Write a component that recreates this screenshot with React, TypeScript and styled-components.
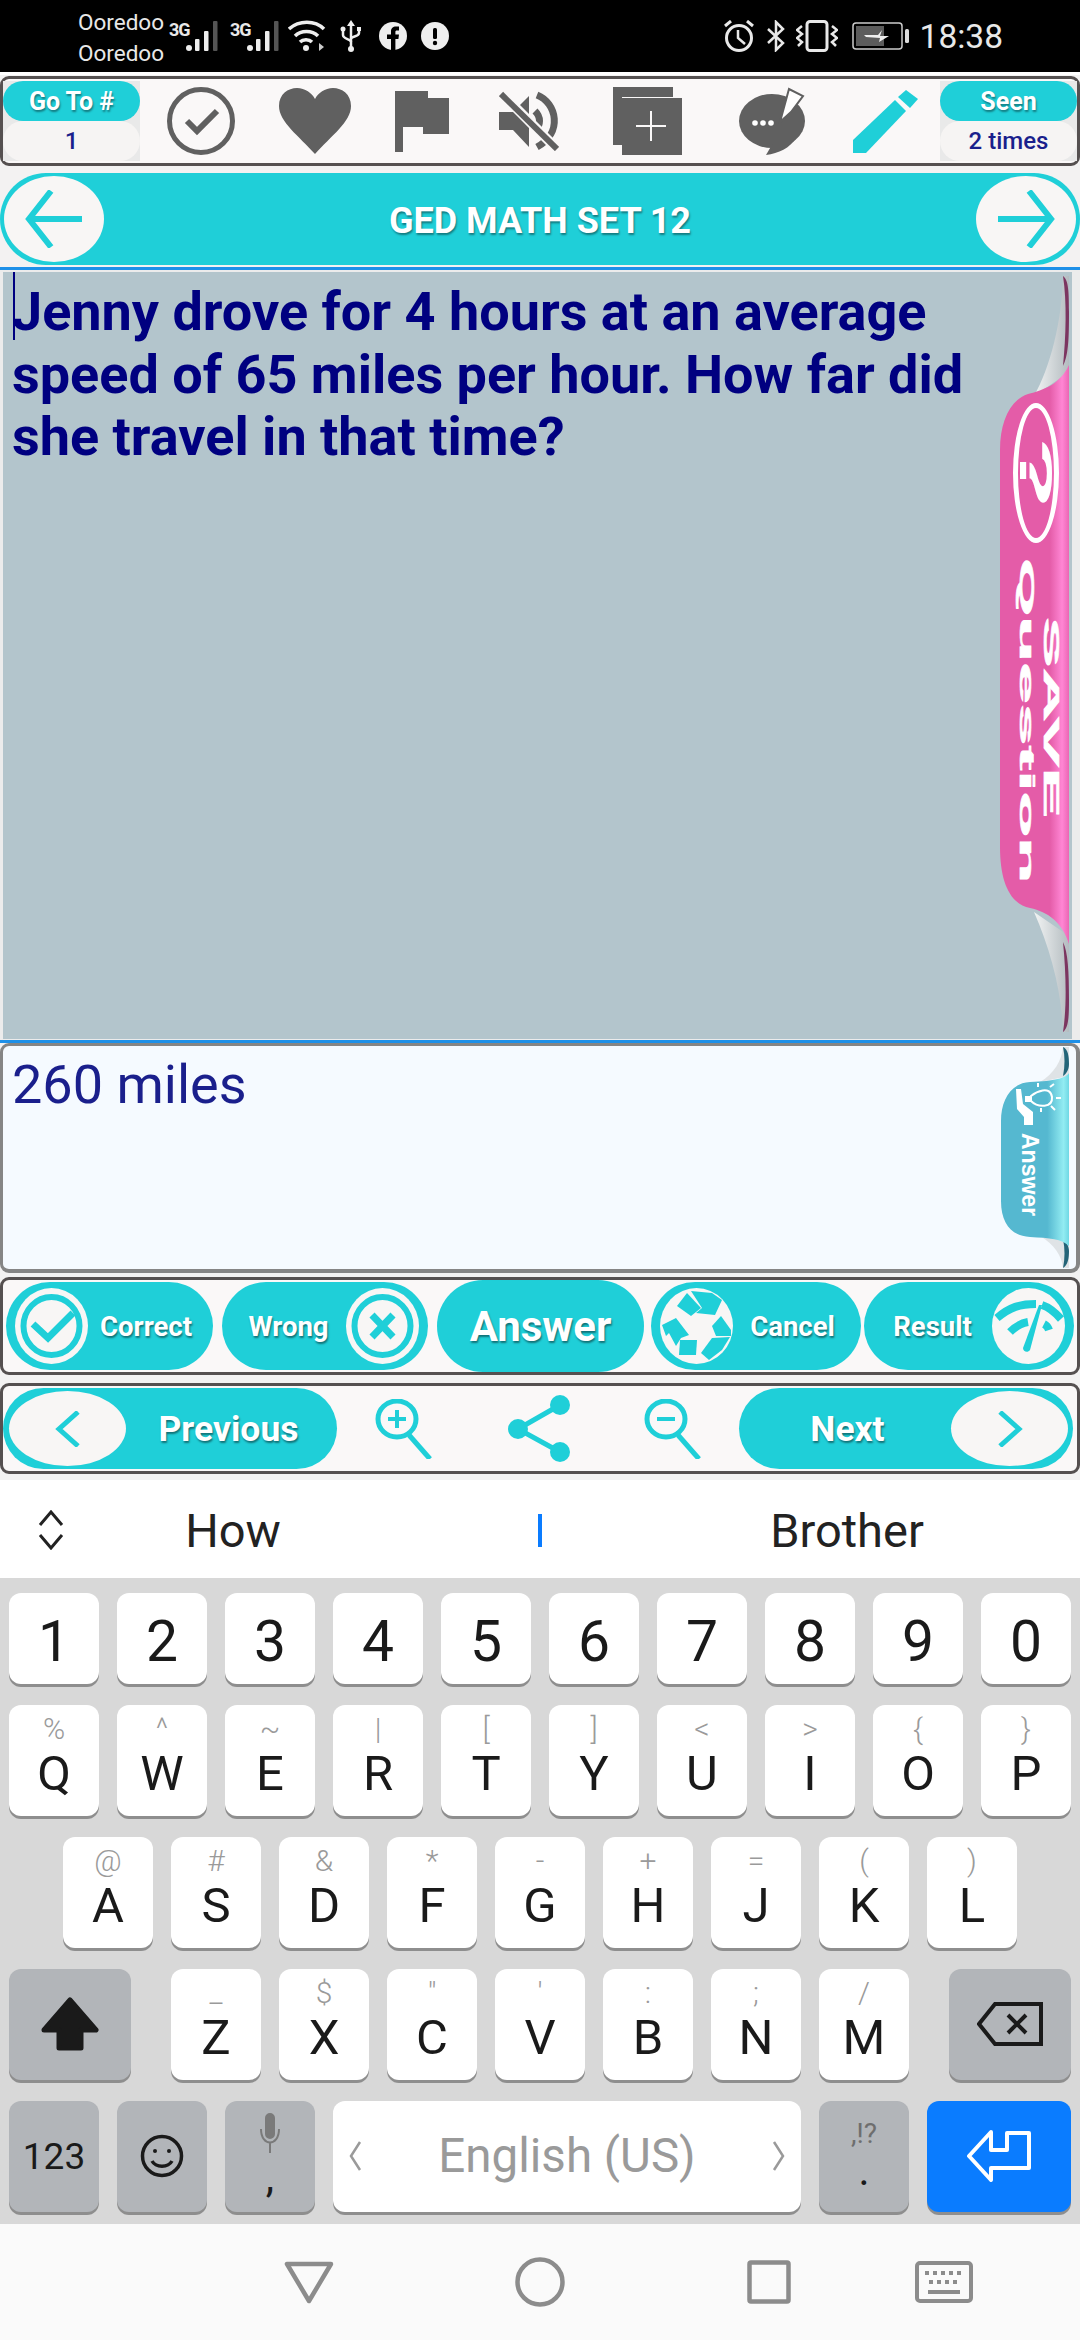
import React from 'react'
import styled, { createGlobalStyle } from 'styled-components'

const TEAL = '#1fcfd8'
const ICON = '#606060'
const NAVY = '#1a1f8c'

const GlobalStyle = createGlobalStyle`
  html, body { margin: 0; padding: 0; background: #f3f2f2; }
  * { box-sizing: border-box; }
  #root { width: 1080px; height: 2340px; overflow: hidden; font-family: Roboto, "Liberation Sans", sans-serif; }
`

const Page = styled.div`
  width: 1080px;
  height: 2340px;
  display: flex;
  flex-direction: column;
  background: #f3f2f2;
`

/* status bar */
const StatusBar = styled.div`
  height: 75px;
  flex-shrink: 0;
  background: #000;
  border-bottom: 3px solid #fff;
  display: flex;
  align-items: center;
  padding: 0 77px 0 78px;
  color: #e8e8e8;
`
const Carriers = styled.div`
  width: 91px;
  font-size: 22.5px;
  line-height: 31px;
  margin-top: 3px;
`
const Tech = styled.span`
  font-size: 18px;
  font-weight: 700;
  line-height: 18px;
  width: 17px;
  margin-top: -13px;
  letter-spacing: -1px;
`
const StatusGroup = styled.div`
  display: flex;
  align-items: center;
  margin-left: ${p => p.$ml ?? 0}px;
`
const Clock = styled.span`
  font-size: 33.5px;
  margin-left: 10px;
`
const Spacer = styled.div`
  flex: 1;
`

/* toolbars */
const Bar = styled.div`
  border: 3px solid #555050;
  border-radius: 9px;
  background: #faf8f8;
  display: flex;
  align-items: center;
  flex-shrink: 0;
  height: ${p => p.$h}px;
  margin-top: ${p => p.$mt ?? 0}px;
  padding: 0 ${p => p.$px ?? 0}px;
`
const Counter = styled.div`
  width: 137px;
  height: 80px;
  background: #e9e9e9;
  display: flex;
  flex-direction: column;
  flex-shrink: 0;
`
const CounterHead = styled.div`
  height: 40px;
  background: ${TEAL};
  border-radius: 20px;
  color: #fff;
  font-size: 25px;
  font-weight: 700;
  display: flex;
  align-items: center;
  justify-content: center;
  text-shadow: 1px 2px 2px rgba(0, 0, 0, 0.4);
`
const CounterValue = styled.div`
  height: 40px;
  background: #f6f4f3;
  border-radius: 20px;
  color: ${NAVY};
  font-size: 24px;
  font-weight: 500;
  display: flex;
  align-items: center;
  justify-content: center;
`
const ToolIcon = styled.svg`
  display: block;
  flex-shrink: 0;
  margin-left: ${p => p.$ml ?? 0}px;
`

const TitleBar = styled.div`
  height: 92px;
  margin-top: 7px;
  flex-shrink: 0;
  background: ${TEAL};
  border-radius: 46px;
  padding: 0 4px;
  display: flex;
  align-items: center;
  justify-content: space-between;
`
const RoundBtn = styled.div`
  width: ${p => p.$w ?? 100}px;
  height: ${p => p.$h ?? 86}px;
  background: #f8f6f5;
  border-radius: 50%;
  display: flex;
  align-items: center;
  justify-content: center;
  flex-shrink: 0;
`
const Title = styled.div`
  color: #fff;
  font-size: 36px;
  font-weight: 700;
  padding-top: 4px;
  text-shadow: 1px 2px 2px rgba(0, 0, 0, 0.4);
`

/* question and answer */
const QuestionPanel = styled.div`
  position: relative;
  height: 776px;
  margin-top: 2px;
  flex-shrink: 0;
  border-top: 3px solid #1e90e8;
  border-bottom: 3px solid #1e90e8;
  padding: 2px 8px 1px 3px;
  background: #ececec;
`
const QuestionBody = styled.div`
  height: 100%;
  background: #b3c5cc;
  padding: 9px 9px;
  color: #000080;
  font-size: 54px;
  font-weight: 700;
  line-height: 62.5px;
  position: relative;
`
const Caret = styled.span`
  position: absolute;
  left: 10px;
  top: 0;
  width: 2px;
  height: 68px;
  background: #000080;
`
const QuestionText = styled.div`
  width: 970px;
`
const AnswerPanel = styled.div`
  position: relative;
  height: 230px;
  flex-shrink: 0;
  background: #f5faff;
  border: 3px solid #858585;
  border-width: 3px 4px 4px 3px;
  border-radius: 9px;
  padding: 8px 9px;
  color: ${NAVY};
  font-size: 54px;
  line-height: 62px;
`
const TabArt = styled.svg`
  position: absolute;
  display: block;
  right: ${p => p.$r}px;
  top: ${p => p.$t}px;
`
const TabText = styled.span`
  position: absolute;
  left: ${p => p.$x}px;
  top: ${p => p.$y}px;
  writing-mode: vertical-rl;
  color: #fff;
  font-family: 'Liberation Sans', Arial, sans-serif;
  font-weight: 700;
  font-size: ${p => p.$size}px;
  line-height: 1;
  white-space: nowrap;
  transform: scaleY(${p => p.$stretch ?? 1});
  transform-origin: top center;
  -webkit-text-stroke: ${p => (p.$stretch ? '0.5px #fff' : '0')};
`
const HelpRing = styled.div`
  position: absolute;
  left: 1013px;
  top: 133px;
  width: 46px;
  height: 140px;
  border: 5px solid #fff;
  border-radius: 50%;
  display: flex;
  align-items: center;
  justify-content: center;
  color: #fff;
  font-family: 'Liberation Sans', Arial, sans-serif;
  font-weight: 700;
  font-size: 46px;
  writing-mode: vertical-rl;
`
const HelpGlyph = styled.span`
  display: block;
  line-height: 1;
  transform: scaleY(2.6);
`

/* pill buttons */
const Pill = styled.div`
  width: ${p => p.$w}px;
  height: ${p => p.$h ?? 88}px;
  margin-left: ${p => p.$ml ?? 0}px;
  border-radius: ${p => (p.$h ?? 88) / 2 + 6}px;
  background: ${TEAL};
  display: flex;
  flex-direction: ${p => (p.$flip ? 'row-reverse' : 'row')};
  align-items: center;
  flex-shrink: 0;
  padding: 0 ${p => p.$pad ?? 9}px;
`
const PillLabel = styled.span`
  flex: 1;
  text-align: center;
  color: #fff;
  font-weight: 700;
  font-size: ${p => p.$size ?? 27.5}px;
  text-shadow: 1px 2px 2px rgba(0, 0, 0, 0.45);
`
const ActionCircle = styled.svg`
  display: block;
  width: 73px;
  height: 76px;
  flex-shrink: 0;
`

/* keyboard */
const Suggestions = styled.div`
  height: 98px;
  margin-top: 6px;
  flex-shrink: 0;
  background: #fff;
  position: relative;
  display: grid;
  grid-template-columns: 78px 310px 1fr 310px 78px;
  align-items: center;
  color: #222;
  font-size: 47px;
  padding-top: 2px;
`
const SuggestWord = styled.span`
  text-align: center;
`
const SuggestCursor = styled.span`
  justify-self: center;
  width: 4px;
  height: 33px;
  background: #0a7cff;
`
const Keyboard = styled.div`
  height: 646px;
  flex-shrink: 0;
  background: #d8d8d8;
  padding: 15px 9px 0;
  display: flex;
  flex-direction: column;
  gap: 21.5px;
`
const KeyRow = styled.div`
  display: flex;
  gap: 18px;
  padding-left: ${p => p.$indent ?? 0}px;
`
const Key = styled.div`
  width: ${p => p.$w ?? 90}px;
  height: ${p => p.$h ?? 110.5}px;
  margin-left: ${p => p.$ml ?? 0}px;
  margin-right: ${p => p.$mr ?? 0}px;
  flex-shrink: 0;
  border-radius: 12px;
  background: ${p => p.$bg ?? '#fff'};
  box-shadow: 0 3px 0 #8e8e8e;
  color: #1a1a1a;
  display: flex;
  flex-direction: column;
  align-items: center;
  justify-content: center;
  position: relative;
`
const Digit = styled.span`
  font-size: 57px;
  line-height: 57px;
  margin-top: 6px;
`
const Hint = styled.span`
  color: #9a9a9a;
  font-size: 30px;
  line-height: 34px;
  height: 34px;
  font-weight: 300;
`
const Letter = styled.span`
  font-size: 49px;
  line-height: 56px;
  font-weight: 400;
  margin-bottom: 7px;
`
const SpaceKey = styled(Key)`
  flex-direction: row;
  justify-content: space-between;
  padding: 0 14px;
  color: #9a9a9a;
  font-size: 47.5px;
`
const SmallKeyText = styled.span`
  font-size: ${p => p.$size ?? 37}px;
  line-height: 1;
  color: ${p => p.$color ?? '#1a1a1a'};
  margin-top: ${p => p.$mt ?? 0}px;
`

const BottomNav = styled.div`
  flex: 1;
  background: #fafafa;
  display: flex;
  align-items: center;
  padding-left: 284px;
`
const NavGlyph = styled.svg`
  display: block;
  margin-left: ${p => p.$ml ?? 0}px;
  flex-shrink: 0;
`

const digits = '1234567890'.split('')
const row2 = [['%', 'Q'], ['^', 'W'], ['~', 'E'], ['|', 'R'], ['[', 'T'], [']', 'Y'], ['<', 'U'], ['>', 'I'], ['{', 'O'], ['}', 'P']]
const row3 = [['@', 'A'], ['#', 'S'], ['&', 'D'], ['*', 'F'], ['-', 'G'], ['+', 'H'], ['=', 'J'], ['(', 'K'], [')', 'L']]
const row4 = [['_', 'Z'], ['$', 'X'], ['"', 'C'], ["'", 'V'], [':', 'B'], [';', 'N'], ['/', 'M']]

const LetterKey = ({ hint, letter }: { hint: string; letter: string }) => (
  <Key>
    <Hint>{hint}</Hint>
    <Letter>{letter}</Letter>
  </Key>
)

const Signal = () => (
  <svg width="32" height="32" viewBox="0 0 32 32" style={{ display: 'block' }}>
    <circle cx="3" cy="28" r="3" fill="#eee" />
    <rect x="9" y="19" width="4.5" height="12" rx="1" fill="#eee" />
    <rect x="18" y="11" width="4.5" height="20" rx="1" fill="#eee" />
    <rect x="27" y="1" width="4.5" height="30" rx="1" fill="#555" />
  </svg>
)

const CheckRing = () => (
  <ActionCircle viewBox="0 0 73 76">
    <ellipse cx="36.5" cy="38" rx="36.5" ry="38" fill="#f8f6f5" />
    <ellipse cx="36.5" cy="38" rx="28" ry="29" fill="none" stroke={TEAL} strokeWidth="6" />
    <path d="M18 36 L33 50 L58 25" fill="none" stroke={TEAL} strokeWidth="7" />
  </ActionCircle>
)

const CrossRing = () => (
  <ActionCircle viewBox="0 0 73 76">
    <ellipse cx="36.5" cy="38" rx="36.5" ry="38" fill="#f8f6f5" />
    <ellipse cx="36.5" cy="38" rx="28" ry="29" fill="none" stroke={TEAL} strokeWidth="6" />
    <path d="M26 27 L47 49 M47 27 L26 49" fill="none" stroke={TEAL} strokeWidth="7" />
  </ActionCircle>
)

const RecycleRing = () => (
  <ActionCircle viewBox="0 0 73 76">
    <ellipse cx="36.5" cy="38" rx="36.5" ry="38" fill="#f8f6f5" />
    <g fill={TEAL}>
      <path d="M17 18 L27 5 L41 20 L31 28 Z" />
      <path d="M31 3 L52 5 L62 12 L55 27 L36 25 L42 20 Z" />
      <path d="M61 28 L71 42 L71 48 L56 48 L52 38 Z" />
      <path d="M41 65 L52 50 L70 49 L62 62 L49 72 Z" />
      <path d="M20 52 L37 52 L36 67 L19 67 Z" />
      <path d="M2 37 L16 30 L29 47 L21 50 L16 58 L9 45 L6 48 Z" />
    </g>
  </ActionCircle>
)

const GaugeRing = () => (
  <ActionCircle viewBox="0 0 73 76">
    <ellipse cx="36.5" cy="38" rx="36.5" ry="38" fill="#f8f6f5" />
    <path d="M5 30 C18 19 28 16 44 16 M50 17 C56 19 62 23 69 31" fill="none" stroke={TEAL} strokeWidth="8" />
    <path d="M18 44 C24 38 30 35 36 34 M52 36 C54 37 56 39 57 42" fill="none" stroke={TEAL} strokeWidth="8" />
    <path d="M47 17 L50 17 L38 62 C36 65 31 64 31 60 Z" fill={TEAL} />
  </ActionCircle>
)

const SaveTab = () => (
  <TabArt $r={8} $t={2} width="72" height="766" viewBox="0 0 72 766">
    <defs>
      <linearGradient id="pink" x1="0" x2="1" y1="0" y2="0">
        <stop offset="0" stopColor="#e45ca8" />
        <stop offset="0.72" stopColor="#e45ca8" />
        <stop offset="0.9" stopColor="#ff86d4" />
        <stop offset="1" stopColor="#ec66b4" />
      </linearGradient>
      <linearGradient id="curl" x1="0" x2="1" y1="0" y2="0">
        <stop offset="0" stopColor="#f2f4f4" />
        <stop offset="1" stopColor="#b4bcc0" />
      </linearGradient>
    </defs>
    <path d="M63 4 C62 50 50 96 34 124 L69 100 L69 4 Z" fill="url(#curl)" />
    <path d="M63 760 C62 720 50 676 34 640 L69 664 L69 760 Z" fill="url(#curl)" />
    <path d="M63 4 C68 8 69 16 69 40 C69 70 68 84 63 94 C66 64 67 30 63 4 Z" fill="#7c3560" />
    <path d="M63 760 C68 756 69 748 69 728 C69 700 68 680 63 670 C66 700 67 734 63 760 Z" fill="#7c3560" />
    <path d="M69 93 C60 112 44 118 28 122 C10 128 0 150 0 178 L0 575 C0 610 10 632 30 636 C48 640 62 650 69 672 Z" fill="url(#pink)" />
  </TabArt>
)

const AnswerTab = () => (
  <TabArt $r={4} $t={0} width="72" height="226" viewBox="0 0 72 226">
    <defs>
      <linearGradient id="aqua" x1="0" x2="1" y1="0" y2="0">
        <stop offset="0" stopColor="#55b8d0" />
        <stop offset="0.68" stopColor="#55b8d0" />
        <stop offset="0.92" stopColor="#92ecf2" />
        <stop offset="1" stopColor="#6fd8e4" />
      </linearGradient>
    </defs>
    <path d="M63 1 C62 14 54 28 40 36 L69 30 L69 1 Z" fill="#dfe3e6" />
    <path d="M63 222 C62 210 54 198 40 190 L69 194 L69 222 Z" fill="#dfe3e6" />
    <path d="M63 1 C68 3 69 10 69 18 C69 24 66 28 63 30 C65 20 65 10 63 1 Z" fill="#236478" />
    <path d="M63 222 C68 219 69 212 69 205 C69 200 66 196 63 193 C65 203 65 212 63 222 Z" fill="#236478" />
    <path d="M69 27 C66 32 55 35 30 36 C10 37 1 55 1 75 L1 155 C1 178 12 190 30 191 C50 192 62 193 69 200 Z" fill="url(#aqua)" />
    <path d="M16 43 L21 43 L23 58 L33 66 L33 79 L24 79 L24 71 L17 63 Z" fill="#fff" />
    <path d="M31 50 C36 46 50 39 52 51 C53 62 38 62 31 55 Z" fill="none" stroke="#fff" strokeWidth="2" />
    <rect x="25" y="50" width="6" height="6" fill="#fff" />
    <path d="M38 41 L38 37 M50 41 L54 38 M56 52 L61 52 M51 60 L55 64 M41 62 L41 66" stroke="#fff" strokeWidth="2" />
  </TabArt>
)

export default function App() {
  return (
    <Page>
      <GlobalStyle />
      <StatusBar>
        <Carriers>
          Ooredoo
          <br />
          Ooredoo
        </Carriers>
        <Tech>3G</Tech>
        <Signal />
        <StatusGroup $ml={12}>
          <Tech>3G</Tech>
          <Signal />
        </StatusGroup>
        <StatusGroup $ml={9}>
          <svg width="38" height="32" viewBox="0 0 38 32" fill="none" stroke="#eee" strokeWidth="3.5" style={{ display: 'block' }}>
            <path d="M1 9 C11 0 27 0 36 9" />
            <path d="M7 16 C13 10 24 10 30 16" />
            <path d="M12 22 C15 19 21 19 24 22" />
            <circle cx="18" cy="28" r="3" fill="#eee" stroke="none" />
            <path d="M31 23 L36 27 L31 31 Z" fill="#ccc" stroke="none" />
          </svg>
        </StatusGroup>
        <StatusGroup $ml={14}>
          <svg width="22" height="32" viewBox="0 0 22 32" fill="none" stroke="#eee" strokeWidth="2.5" style={{ display: 'block' }}>
            <path d="M11 4 L11 28" />
            <path d="M11 0 L15 6 L7 6 Z" fill="#eee" stroke="none" />
            <path d="M3 10 L3 15 C3 19 11 19 11 22" />
            <path d="M19 10 L19 13 C19 17 11 16 11 19" />
            <circle cx="11" cy="29" r="3" fill="#eee" stroke="none" />
            <circle cx="3" cy="9" r="2.5" fill="#eee" stroke="none" />
            <rect x="17" y="7" width="4" height="4" fill="#eee" stroke="none" />
          </svg>
        </StatusGroup>
        <StatusGroup $ml={17}>
          <svg width="28" height="28" viewBox="0 0 28 28" style={{ display: 'block' }}>
            <circle cx="14" cy="14" r="14" fill="#eee" />
            <path d="M12 28 L12 17 L8 17 L8 12.5 L12 12.5 L12 9.5 C12 6 14 4.5 17 4.5 L20 4.5 L20 8.5 L18 8.5 C16.7 8.5 16.4 9 16.4 10 L16.4 12.5 L20 12.5 L19.4 17 L16.4 17 L16.4 28 Z" fill="#000" />
          </svg>
        </StatusGroup>
        <StatusGroup $ml={14}>
          <svg width="28" height="28" viewBox="0 0 28 28" style={{ display: 'block' }}>
            <circle cx="14" cy="14" r="14" fill="#eee" />
            <rect x="12" y="6" width="4" height="11" rx="1.5" fill="#000" />
            <circle cx="14" cy="21" r="2.2" fill="#000" />
          </svg>
        </StatusGroup>
        <Spacer />
        <svg width="32" height="32" viewBox="0 0 32 32" fill="none" stroke="#e8e8e8" strokeWidth="3" style={{ display: 'block' }}>
          <circle cx="16" cy="18" r="12.5" />
          <path d="M15 10 L15 18 L22 24" strokeWidth="2.5" />
          <path d="M2 6 L8 1 M30 6 L24 1" />
        </svg>
        <StatusGroup $ml={12}>
          <svg width="18" height="32" viewBox="0 0 18 32" fill="none" stroke="#e8e8e8" strokeWidth="2.5" style={{ display: 'block' }}>
            <path d="M1 9 L16 23 L9 30 L9 2 L16 9 L1 23" />
          </svg>
        </StatusGroup>
        <StatusGroup $ml={11}>
          <svg width="42" height="32" viewBox="0 0 42 32" fill="none" stroke="#e8e8e8" strokeWidth="2.5" style={{ display: 'block' }}>
            <rect x="11" y="1.5" width="20" height="29" rx="3" strokeWidth="3" />
            <path d="M6 6 L1 10 L6 14 L1 18 L6 22 L2 26" />
            <path d="M36 6 L41 10 L36 14 L41 18 L36 22 L40 26" />
          </svg>
        </StatusGroup>
        <StatusGroup $ml={14}>
          <svg width="58" height="28" viewBox="0 0 58 28" style={{ display: 'block' }}>
            <rect x="1" y="1" width="49" height="26" rx="3" fill="none" stroke="#ccc" strokeWidth="1.5" />
            <rect x="4" y="4" width="28" height="20" fill="#5c5c5c" />
            <path d="M12 13 L26 13 L30 8 L28 14 L37 14 L27 20 L28 16 L14 15 Z" fill="#eee" />
            <rect x="53" y="7" width="4" height="14" rx="1.5" fill="#ddd" />
          </svg>
        </StatusGroup>
        <Clock>18:38</Clock>
      </StatusBar>

      <Bar $h={90} $mt={1} $px={0}>
        <Counter>
          <CounterHead>Go To #</CounterHead>
          <CounterValue>1</CounterValue>
        </Counter>
        <ToolIcon $ml={27} width="68" height="68" viewBox="0 0 68 68">
          <circle cx="34" cy="34" r="31.5" fill="none" stroke={ICON} strokeWidth="5" />
          <path d="M20 34 L30 44 L50 24" fill="none" stroke={ICON} strokeWidth="6" />
        </ToolIcon>
        <ToolIcon $ml={44} width="72" height="66" viewBox="0 0 72 66">
          <path d="M36 66 C20 48 0 34 0 18 C0 6 9 0 18 0 C26 0 33 5 36 11 C39 5 46 0 54 0 C63 0 72 6 72 18 C72 34 52 48 36 66 Z" fill={ICON} />
        </ToolIcon>
        <ToolIcon $ml={44} width="55" height="61" viewBox="0 0 55 61">
          <path d="M0 0 L33 0 L33 7 L54 7 L54 43 L28 43 L28 36 L8 36 L8 61 L0 61 Z" fill={ICON} />
        </ToolIcon>
        <ToolIcon $ml={49} width="60" height="60" viewBox="0 0 60 60">
          <path d="M0 21 L14 21 L30 5 L30 56 L14 39 L0 39 Z" fill={ICON} />
          <path d="M38 4 C58 12 64 42 38 56 M36 20 C42 26 42 34 36 40" fill="none" stroke={ICON} strokeWidth="7" />
          <path d="M2 2 L58 58" stroke="#faf8f8" strokeWidth="10" />
          <path d="M2 3 L58 58" stroke={ICON} strokeWidth="6" />
        </ToolIcon>
        <ToolIcon $ml={54} width="69" height="68" viewBox="0 0 69 68">
          <path d="M0 0 L60 0 L60 10 L9 10 L9 58 L0 58 Z" fill={ICON} />
          <rect x="9" y="11" width="60" height="57" fill={ICON} />
          <path d="M38 24 L38 54 M23 39 L53 39" stroke="#faf8f8" strokeWidth="2" />
        </ToolIcon>
        <ToolIcon $ml={57} width="67" height="68" viewBox="0 0 67 68">
          <ellipse cx="33" cy="34" rx="33" ry="27" fill={ICON} />
          <path d="M34 56 L27 68 C40 66 50 62 58 50 Z" fill={ICON} />
          <path d="M41 35 L50 2 L64 9 L52 25 Z" fill="#fff" stroke={ICON} strokeWidth="2" />
          <circle cx="16" cy="36" r="2.8" fill="#fff" />
          <circle cx="24" cy="36" r="2.8" fill="#fff" />
          <circle cx="32" cy="36" r="2.8" fill="#fff" />
        </ToolIcon>
        <ToolIcon $ml={47} width="66" height="66" viewBox="0 0 66 66">
          <path d="M0 52 L42 12 L53 23 L13 65 L0 65 Z" fill={TEAL} />
          <path d="M45 9 L53 2 L65 11 L57 20 Z" fill={TEAL} />
        </ToolIcon>
        <Spacer />
        <Counter>
          <CounterHead>Seen</CounterHead>
          <CounterValue>2 times</CounterValue>
        </Counter>
      </Bar>

      <TitleBar>
        <RoundBtn>
          <svg width="58" height="58" viewBox="0 0 58 58" fill="none" stroke={TEAL} strokeWidth="6">
            <path d="M57 29 L4 29 M26 1 L4 29 L26 57" />
          </svg>
        </RoundBtn>
        <Title>GED MATH SET 12</Title>
        <RoundBtn>
          <svg width="58" height="58" viewBox="0 0 58 58" fill="none" stroke={TEAL} strokeWidth="6">
            <path d="M1 29 L54 29 M32 1 L54 29 L32 57" />
          </svg>
        </RoundBtn>
      </TitleBar>

      <QuestionPanel>
        <QuestionBody>
          <Caret />
          <QuestionText>Jenny drove for 4 hours at an average speed of 65 miles per hour. How far did she travel in that time?</QuestionText>
        </QuestionBody>
        <SaveTab />
        <HelpRing>
          <HelpGlyph>?</HelpGlyph>
        </HelpRing>
        <TabText $x={1040} $y={347} $size={22} $stretch={3.45}>SAVE</TabText>
        <TabText $x={1017} $y={288} $size={20} $stretch={3.75}>Question</TabText>
      </QuestionPanel>

      <AnswerPanel>
        260 miles
        <AnswerTab />
        <TabText $x={1015} $y={87} $size={23}>Answer</TabText>
      </AnswerPanel>

      <Bar $h={98} $mt={4} $px={3}>
        <Pill $w={207}>
          <CheckRing />
          <PillLabel>Correct</PillLabel>
        </Pill>
        <Pill $w={206} $ml={9} $flip>
          <CrossRing />
          <PillLabel>Wrong</PillLabel>
        </Pill>
        <Pill $w={207} $h={92} $ml={9}>
          <PillLabel $size={42}>Answer</PillLabel>
        </Pill>
        <Pill $w={210} $ml={7}>
          <RecycleRing />
          <PillLabel>Cancel</PillLabel>
        </Pill>
        <Pill $w={210} $ml={3} $flip>
          <GaugeRing />
          <PillLabel>Result</PillLabel>
        </Pill>
      </Bar>

      <Bar $h={91} $mt={8} $px={0}>
        <Pill $w={334} $h={81} $pad={6}>
          <RoundBtn $w={117} $h={75}>
            <svg width="26" height="36" viewBox="0 0 26 36" fill="none" stroke={TEAL} strokeWidth="5">
              <path d="M23 1 L4 18 L23 35" />
            </svg>
          </RoundBtn>
          <PillLabel $size={35.5}>Previous</PillLabel>
        </Pill>
        <ToolIcon $ml={38} width="57" height="60" viewBox="0 0 57 60">
          <ellipse cx="22" cy="20" rx="19" ry="18" fill="none" stroke={TEAL} strokeWidth="5" />
          <path d="M34 36 L55 60" stroke={TEAL} strokeWidth="5" />
          <path d="M22 11 L22 29 M13 20 L31 20" stroke={TEAL} strokeWidth="4" />
        </ToolIcon>
        <ToolIcon $ml={76} width="62" height="67" viewBox="0 0 62 67">
          <path d="M52 10 L10 34 L52 57" fill="none" stroke={TEAL} strokeWidth="5" />
          <circle cx="52" cy="10" r="10" fill={TEAL} />
          <circle cx="10" cy="34" r="10" fill={TEAL} />
          <circle cx="52" cy="57" r="10" fill={TEAL} />
        </ToolIcon>
        <ToolIcon $ml={74} width="57" height="60" viewBox="0 0 57 60">
          <ellipse cx="22" cy="20" rx="19" ry="18" fill="none" stroke={TEAL} strokeWidth="5" />
          <path d="M34 36 L55 60" stroke={TEAL} strokeWidth="5" />
          <path d="M13 20 L31 20" stroke={TEAL} strokeWidth="4" />
        </ToolIcon>
        <Pill $w={334} $h={81} $ml={38} $pad={5} $flip>
          <RoundBtn $w={117} $h={75}>
            <svg width="26" height="36" viewBox="0 0 26 36" fill="none" stroke={TEAL} strokeWidth="5">
              <path d="M3 1 L22 18 L3 35" />
            </svg>
          </RoundBtn>
          <PillLabel $size={35.5}>Next</PillLabel>
        </Pill>
      </Bar>

      <Suggestions>
        <svg width="78" height="40" viewBox="0 0 78 40" fill="none" stroke="#222" strokeWidth="3">
          <path d="M40 15 L51 2 L62 15 M40 25 L51 38 L62 25" />
        </svg>
        <SuggestWord>How</SuggestWord>
        <SuggestCursor />
        <SuggestWord>Brother</SuggestWord>
      </Suggestions>

      <Keyboard>
        <KeyRow>
          {digits.map(d => (
            <Key key={d} $h={90.5}>
              <Digit>{d}</Digit>
            </Key>
          ))}
        </KeyRow>
        <KeyRow>
          {row2.map(([h, l]) => (
            <LetterKey key={l} hint={h} letter={l} />
          ))}
        </KeyRow>
        <KeyRow $indent={54}>
          {row3.map(([h, l]) => (
            <LetterKey key={l} hint={h} letter={l} />
          ))}
        </KeyRow>
        <KeyRow>
          <Key $w={122} $mr={22} $bg="#b2b5b9">
            <svg width="60" height="54" viewBox="0 0 60 54">
              <path d="M30 3 L56 33 L41 33 L41 51 L19 51 L19 33 L4 33 Z" fill="#1a1a1a" stroke="#1a1a1a" strokeWidth="5" strokeLinejoin="round" />
            </svg>
          </Key>
          {row4.map(([h, l]) => (
            <LetterKey key={l} hint={h} letter={l} />
          ))}
          <Key $w={122} $ml={22} $bg="#b2b5b9">
            <svg width="66" height="44" viewBox="0 0 66 44" fill="none" stroke="#1a1a1a" strokeWidth="4">
              <path d="M18 2 L64 2 L64 42 L18 42 L2 22 Z" />
              <path d="M31 13 L49 31 M49 13 L31 31" />
            </svg>
          </Key>
        </KeyRow>
        <KeyRow>
          <Key $bg="#b2b5b9">
            <SmallKeyText>123</SmallKeyText>
          </Key>
          <Key $bg="#b2b5b9">
            <svg width="44" height="44" viewBox="0 0 44 44" fill="none" stroke="#1a1a1a" strokeWidth="3.5">
              <circle cx="22" cy="22" r="19.5" />
              <circle cx="15" cy="17" r="2" fill="#1a1a1a" stroke="none" />
              <circle cx="29" cy="17" r="2" fill="#1a1a1a" stroke="none" />
              <path d="M12 27 C16 34 28 34 32 27" />
            </svg>
          </Key>
          <Key $bg="#b2b5b9">
            <svg width="22" height="40" viewBox="0 0 22 40" fill="none" stroke="#7a7a7a" strokeWidth="2">
              <rect x="7" y="1" width="8" height="24" rx="4" fill="#7a7a7a" />
              <path d="M2 16 C2 34 20 34 20 16 M11 30 L11 40" />
            </svg>
            <SmallKeyText $size={42} $mt={4}>,</SmallKeyText>
          </Key>
          <SpaceKey $w={468}>
            <svg width="20" height="32" viewBox="0 0 20 32" fill="none" stroke="#9a9a9a" strokeWidth="2.5">
              <path d="M13 2 L4 16 L13 30" />
            </svg>
            <span>English (US)</span>
            <svg width="20" height="32" viewBox="0 0 20 32" fill="none" stroke="#9a9a9a" strokeWidth="2.5">
              <path d="M7 2 L16 16 L7 30" />
            </svg>
          </SpaceKey>
          <Key $bg="#b2b5b9">
            <SmallKeyText $size={28} $color="#6e6e6e">,!?</SmallKeyText>
            <SmallKeyText $size={42} $mt={2}>.</SmallKeyText>
          </Key>
          <Key $w={144} $bg="#0a7cff">
            <svg width="64" height="52" viewBox="0 0 64 52" fill="none" stroke="#fff" strokeWidth="4" strokeLinejoin="round">
              <path d="M24 2 L2 26 L24 50 L24 38 L62 38 L62 3 L40 3 L40 20 L24 20 Z" />
            </svg>
          </Key>
        </KeyRow>
      </Keyboard>

      <BottomNav>
        <NavGlyph width="50" height="43" viewBox="0 0 50 43" fill="none" stroke="#8c8c8c" strokeWidth="4.5" strokeLinejoin="round">
          <path d="M3 3 L47 3 L25 40 Z" />
        </NavGlyph>
        <NavGlyph $ml={181} width="50" height="50" viewBox="0 0 50 50" fill="none" stroke="#8c8c8c" strokeWidth="4.5">
          <circle cx="25" cy="25" r="22.5" />
        </NavGlyph>
        <NavGlyph $ml={182} width="44" height="44" viewBox="0 0 44 44" fill="none" stroke="#8c8c8c" strokeWidth="4.5">
          <rect x="2.5" y="2.5" width="39" height="39" rx="1.5" />
        </NavGlyph>
        <NavGlyph $ml={124} width="58" height="42" viewBox="0 0 58 42" fill="none" stroke="#8c8c8c" strokeWidth="4">
          <rect x="2" y="2" width="54" height="38" rx="3" />
          <path d="M10 12 L48 12 M14 21 L44 21" strokeDasharray="4 4" strokeWidth="4" />
          <path d="M13 31 L45 31" strokeWidth="4" />
        </NavGlyph>
      </BottomNav>
    </Page>
  )
}
